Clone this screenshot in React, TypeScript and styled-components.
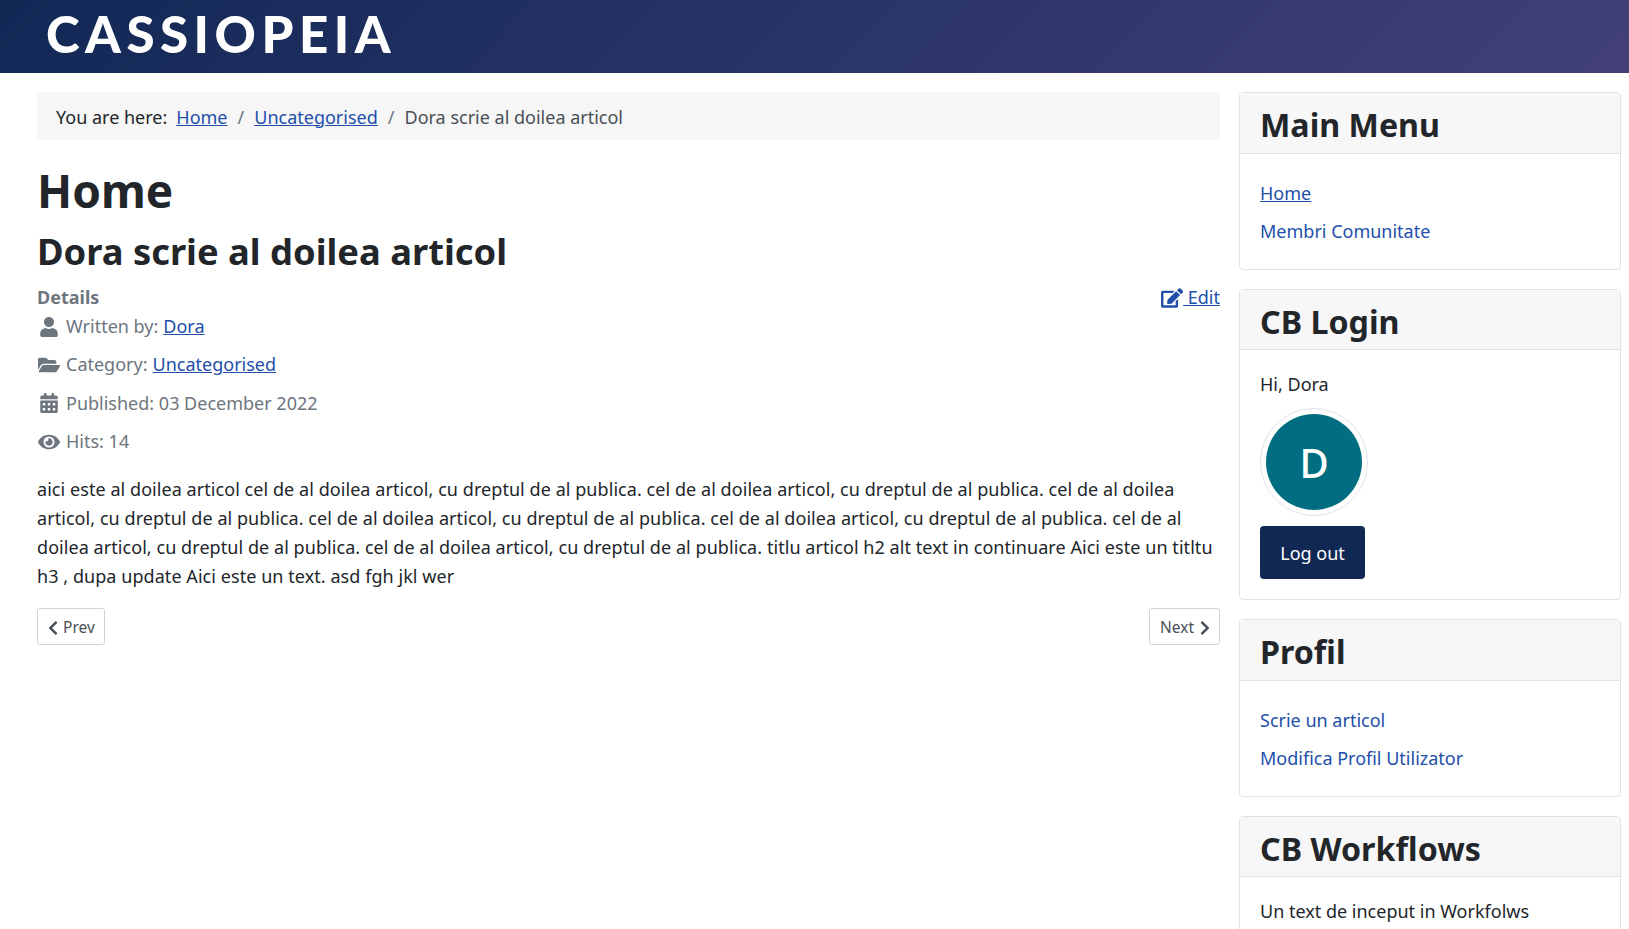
import React from "react";
import styled, { createGlobalStyle } from "styled-components";
import {
  FaCalendarAlt,
  FaChevronLeft,
  FaChevronRight,
  FaEdit,
  FaEye,
  FaFolderOpen,
  FaUser,
} from "react-icons/fa";

const GlobalStyle = createGlobalStyle`
  html, body {
    margin: 0;
    height: 100%;
    overflow: hidden;
    background: #fff;
  }

  body {
    font-family: "Noto Sans", "Open Sans", sans-serif;
    font-size: 18px;
    line-height: 29px;
    color: #22262a;
  }

  a {
    color: #224faa;
  }
`;

const Header = styled.header`
  display: flex;
  align-items: center;
  height: 73px;
  padding: 0 0 7px 46px;
  box-sizing: border-box;
  background: linear-gradient(135deg, #112855 0%, #424077 100%);
`;

const Logo = styled.div`
  font-family: Lato, sans-serif;
  font-weight: 900;
  font-size: 51px;
  line-height: 1;
  letter-spacing: 5.5px;
  color: #fff;
`;

const Grid = styled.div`
  display: grid;
  grid-template-columns: 1183px 382px;
  column-gap: 19px;
  padding: 19px 8px 0 37px;
`;

const Main = styled.main`
  min-width: 0;
`;

const Breadcrumb = styled.nav`
  display: flex;
  align-items: center;
  box-sizing: border-box;
  height: 48px;
  padding: 2px 0 0 19px;
  background: #f6f6f6;
  color: #495057;
`;

const BreadcrumbLabel = styled.span`
  color: #22262a;
  margin-right: 9px;
`;

const Divider = styled.span`
  color: #6d757e;
  margin: 0 10px;
`;

const PageTitle = styled.h1`
  margin: 22px 0 0;
  font-size: 46px;
  line-height: 56px;
  font-weight: 700;
`;

const ArticleTitle = styled.h2`
  margin: 10px 0 0;
  font-size: 36.3px;
  line-height: 46px;
  font-weight: 700;
`;

const ArticleInfo = styled.div`
  position: relative;
  margin-top: 9px;
  margin-bottom: 19px;
  color: #6d757e;
`;

const InfoTitle = styled.div`
  font-weight: 700;
`;

const InfoRow = styled.div`
  display: flex;
  align-items: center;
  height: 29px;
  margin-bottom: 9.4px;
`;

const InfoIcon = styled.span`
  display: flex;
  justify-content: center;
  width: 22px;
  margin: 0 6px 0 1px;

  svg {
    width: 22px;
    height: 20px;
  }
`;

const InfoLink = styled.a`
  margin-left: 5px;
`;

const EditLink = styled.a`
  position: absolute;
  top: 0;
  right: 0;
  display: flex;
  align-items: center;
  text-decoration: none;

  svg {
    width: 22px;
    height: 20px;
  }
`;

const EditText = styled.span`
  white-space: pre;
  text-decoration: underline;
`;

const Body = styled.p`
  margin: 0;
  letter-spacing: 0.06px;
`;

const Pager = styled.div`
  display: flex;
  justify-content: space-between;
  margin-top: 17px;
`;

const PagerButton = styled.a`
  display: flex;
  align-items: center;
  gap: 5.5px;
  height: 33px;
  padding: 2px 9.5px 0;
  border: 1px solid #ced4da;
  border-radius: 3px;
  font-size: 15.5px;
  color: #495057;
  text-decoration: none;

  svg {
    width: 10px;
    height: 16px;
  }
`;

const Sidebar = styled.aside`
  display: flex;
  flex-direction: column;
  gap: 19px;
  padding-top: 0.4px;
`;

const Card = styled.section`
  border: 1px solid #dfe3e7;
  border-radius: 4px;
  background: #fff;
`;

const CardHeader = styled.h3`
  margin: 0;
  box-sizing: border-box;
  height: 60.4px;
  padding: 3px 20px 0;
  display: flex;
  align-items: center;
  background: #f7f7f7;
  border-bottom: 1px solid #dfe3e7;
  font-size: 32.2px;
  font-weight: 700;
`;

const CardBody = styled.div`
  padding: 20px;
`;

const MenuList = styled.ul`
  list-style: none;
  margin: 0;
  padding: 5px 0 3.2px;
`;

const MenuItem = styled.li`
  height: 29px;

  & + & {
    margin-top: 9px;
  }
`;

const PlainLink = styled.a<{ $active?: boolean }>`
  text-decoration: ${({ $active }) => ($active ? "underline" : "none")};
`;

const Avatar = styled.div`
  display: flex;
  align-items: center;
  justify-content: center;
  box-sizing: border-box;
  width: 108px;
  height: 108px;
  padding: 5px;
  margin: 9px 0 10px;
  border: 1px solid #dfe3e7;
  border-radius: 50%;
  background: #006e80;
  background-clip: content-box;
  color: #fff;
  font-size: 40px;
  font-weight: 500;
`;

const LogoutButton = styled.button`
  display: block;
  width: 105px;
  height: 53px;
  padding: 2px 0 0;
  border: 0;
  border-radius: 4px;
  background: #112855;
  color: #fff;
  font: inherit;
`;

const crumbs = ["Home", "Uncategorised"];

const App: React.FC = () => {
  return (
    <>
      <GlobalStyle />
      <Header>
        <Logo>CASSIOPEIA</Logo>
      </Header>
      <Grid>
        <Main>
          <Breadcrumb>
            <BreadcrumbLabel>You are here:</BreadcrumbLabel>
            {crumbs.map((c) => (
              <React.Fragment key={c}>
                <a href="#">{c}</a>
                <Divider>/</Divider>
              </React.Fragment>
            ))}
            Dora scrie al doilea articol
          </Breadcrumb>
          <PageTitle>Home</PageTitle>
          <ArticleTitle>Dora scrie al doilea articol</ArticleTitle>
          <ArticleInfo>
            <EditLink href="#">
              <FaEdit />
              <EditText> Edit</EditText>
            </EditLink>
            <InfoTitle>Details</InfoTitle>
            <InfoRow>
              <InfoIcon><FaUser /></InfoIcon>
              Written by:<InfoLink href="#">Dora</InfoLink>
            </InfoRow>
            <InfoRow>
              <InfoIcon><FaFolderOpen /></InfoIcon>
              Category:<InfoLink href="#">Uncategorised</InfoLink>
            </InfoRow>
            <InfoRow>
              <InfoIcon><FaCalendarAlt /></InfoIcon>
              Published: 03 December 2022
            </InfoRow>
            <InfoRow>
              <InfoIcon><FaEye /></InfoIcon>
              Hits: 14
            </InfoRow>
          </ArticleInfo>
          <Body>
            aici este al doilea articol cel de al doilea articol, cu dreptul de al publica. cel de al doilea articol, cu dreptul de al publica. cel de al doilea articol, cu dreptul de al publica. cel de al doilea articol, cu dreptul de al publica. cel de al doilea articol, cu dreptul de al publica. cel de al doilea articol, cu dreptul de al publica. cel de al doilea articol, cu dreptul de al publica. titlu articol h2 alt text in continuare Aici este un titltu h3 , dupa update Aici este un text. asd fgh jkl wer
          </Body>
          <Pager>
            <PagerButton href="#"><FaChevronLeft /> Prev</PagerButton>
            <PagerButton href="#">Next <FaChevronRight /></PagerButton>
          </Pager>
        </Main>
        <Sidebar>
          <Card>
            <CardHeader>Main Menu</CardHeader>
            <CardBody>
              <MenuList>
                <MenuItem><PlainLink href="#" $active>Home</PlainLink></MenuItem>
                <MenuItem><PlainLink href="#">Membri Comunitate</PlainLink></MenuItem>
              </MenuList>
            </CardBody>
          </Card>
          <Card>
            <CardHeader>CB Login</CardHeader>
            <CardBody>
              <div>Hi, Dora</div>
              <Avatar>D</Avatar>
              <LogoutButton>Log out</LogoutButton>
            </CardBody>
          </Card>
          <Card>
            <CardHeader>Profil</CardHeader>
            <CardBody>
              <MenuList>
                <MenuItem><PlainLink href="#">Scrie un articol</PlainLink></MenuItem>
                <MenuItem><PlainLink href="#">Modifica Profil Utilizator</PlainLink></MenuItem>
              </MenuList>
            </CardBody>
          </Card>
          <Card>
            <CardHeader>CB Workflows</CardHeader>
            <CardBody>Un text de inceput in Workfolws</CardBody>
          </Card>
        </Sidebar>
      </Grid>
    </>
  );
};

export default App;
